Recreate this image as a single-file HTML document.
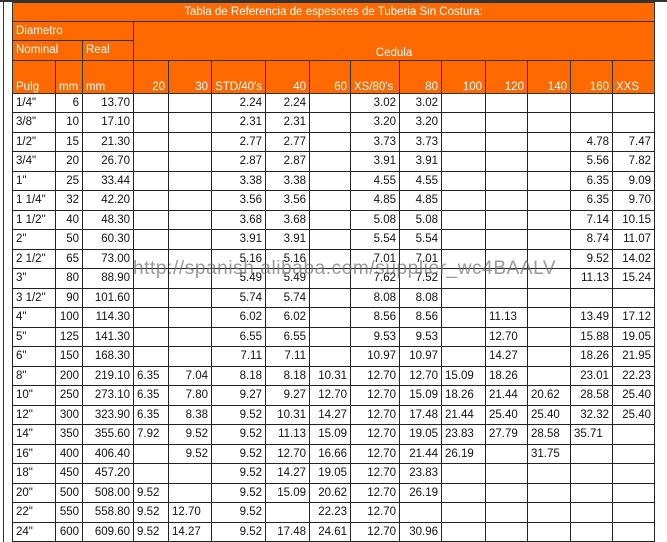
<!DOCTYPE html>
<html><head><meta charset="utf-8"><style>
html,body{margin:0;padding:0;background:#fff;width:667px;height:542px;overflow:hidden;position:relative}
table{position:absolute;left:12px;top:2px;border-collapse:collapse;table-layout:fixed;font-family:"Liberation Sans",sans-serif;font-size:11.5px;color:#111}
td{border:1px solid #222;padding:0 3px;height:18.5px;white-space:nowrap;overflow:hidden;text-align:right}
.h td{background:#ff6a00;color:#fff;border-color:#333}
td.l{text-align:left}
.wm{position:absolute;left:133px;top:258px;font-family:"Liberation Sans",sans-serif;font-size:19px;color:rgba(110,110,110,0.7);letter-spacing:0.6px;pointer-events:none}
.frame{position:absolute;left:3px;top:0;width:1px;height:542px;background:#333}
.top{position:absolute;left:0;top:0;width:667px;height:2px;background:#333}
</style></head><body>
<div class="frame"></div><div class="top"></div>
<table>
<colgroup><col style="width:43px"><col style="width:27px"><col style="width:51px"><col style="width:35px"><col style="width:43px"><col style="width:54px"><col style="width:44px"><col style="width:41px"><col style="width:49px"><col style="width:42px"><col style="width:44px"><col style="width:42px"><col style="width:43px"><col style="width:42px"><col style="width:42px"></colgroup>
<tr class="h"><td colspan="15" style="text-align:center;height:18px">Tabla de Referencia de espesores de Tuberia Sin Costura:</td></tr>
<tr class="h"><td colspan="3" class="l" style="height:18px">Diametro</td><td colspan="12" rowspan="2" style="text-align:center;vertical-align:bottom;padding-bottom:1px">Cedula</td></tr>
<tr class="h"><td colspan="2" class="l" style="height:18px">Nominal</td><td class="l">Real</td></tr>
<tr class="h" style="vertical-align:bottom"><td class="l" style="height:32px">Pulg</td><td class="l">mm</td><td class="l">mm</td><td>20</td><td>30</td><td>STD/40's</td><td>40</td><td>60</td><td class="l">XS/80's</td><td>80</td><td>100</td><td>120</td><td>140</td><td>160</td><td class="l">XXS</td></tr>
<tr><td class="l">1/4"</td><td>6</td><td>13.70</td><td></td><td></td><td>2.24</td><td>2.24</td><td></td><td>3.02</td><td>3.02</td><td></td><td></td><td></td><td></td><td></td></tr>
<tr><td class="l">3/8"</td><td>10</td><td>17.10</td><td></td><td></td><td>2.31</td><td>2.31</td><td></td><td>3.20</td><td>3.20</td><td></td><td></td><td></td><td></td><td></td></tr>
<tr><td class="l">1/2"</td><td>15</td><td>21.30</td><td></td><td></td><td>2.77</td><td>2.77</td><td></td><td>3.73</td><td>3.73</td><td></td><td></td><td></td><td>4.78</td><td>7.47</td></tr>
<tr><td class="l">3/4"</td><td>20</td><td>26.70</td><td></td><td></td><td>2.87</td><td>2.87</td><td></td><td>3.91</td><td>3.91</td><td></td><td></td><td></td><td>5.56</td><td>7.82</td></tr>
<tr><td class="l">1"</td><td>25</td><td>33.44</td><td></td><td></td><td>3.38</td><td>3.38</td><td></td><td>4.55</td><td>4.55</td><td></td><td></td><td></td><td>6.35</td><td>9.09</td></tr>
<tr><td class="l">1 1/4"</td><td>32</td><td>42.20</td><td></td><td></td><td>3.56</td><td>3.56</td><td></td><td>4.85</td><td>4.85</td><td></td><td></td><td></td><td>6.35</td><td>9.70</td></tr>
<tr><td class="l">1 1/2"</td><td>40</td><td>48.30</td><td></td><td></td><td>3.68</td><td>3.68</td><td></td><td>5.08</td><td>5.08</td><td></td><td></td><td></td><td>7.14</td><td>10.15</td></tr>
<tr><td class="l">2"</td><td>50</td><td>60.30</td><td></td><td></td><td>3.91</td><td>3.91</td><td></td><td>5.54</td><td>5.54</td><td></td><td></td><td></td><td>8.74</td><td>11.07</td></tr>
<tr><td class="l">2 1/2"</td><td>65</td><td>73.00</td><td></td><td></td><td>5.16</td><td>5.16</td><td></td><td>7.01</td><td>7.01</td><td></td><td></td><td></td><td>9.52</td><td>14.02</td></tr>
<tr><td class="l">3"</td><td>80</td><td>88.90</td><td></td><td></td><td>5.49</td><td>5.49</td><td></td><td>7.62</td><td>7.52</td><td></td><td></td><td></td><td>11.13</td><td>15.24</td></tr>
<tr><td class="l">3 1/2"</td><td>90</td><td>101.60</td><td></td><td></td><td>5.74</td><td>5.74</td><td></td><td>8.08</td><td>8.08</td><td></td><td></td><td></td><td></td><td></td></tr>
<tr><td class="l">4"</td><td>100</td><td>114.30</td><td></td><td></td><td>6.02</td><td>6.02</td><td></td><td>8.56</td><td>8.56</td><td></td><td class="l">11.13</td><td></td><td>13.49</td><td>17.12</td></tr>
<tr><td class="l">5"</td><td>125</td><td>141.30</td><td></td><td></td><td>6.55</td><td>6.55</td><td></td><td>9.53</td><td>9.53</td><td></td><td class="l">12.70</td><td></td><td>15.88</td><td>19.05</td></tr>
<tr><td class="l">6"</td><td>150</td><td>168.30</td><td></td><td></td><td>7.11</td><td>7.11</td><td></td><td>10.97</td><td>10.97</td><td></td><td class="l">14.27</td><td></td><td>18.26</td><td>21.95</td></tr>
<tr><td class="l">8"</td><td>200</td><td>219.10</td><td class="l">6.35</td><td>7.04</td><td>8.18</td><td>8.18</td><td>10.31</td><td>12.70</td><td>12.70</td><td class="l">15.09</td><td class="l">18.26</td><td></td><td>23.01</td><td>22.23</td></tr>
<tr><td class="l">10"</td><td>250</td><td>273.10</td><td class="l">6.35</td><td>7.80</td><td>9.27</td><td>9.27</td><td>12.70</td><td>12.70</td><td>15.09</td><td class="l">18.26</td><td class="l">21.44</td><td class="l">20.62</td><td>28.58</td><td>25.40</td></tr>
<tr><td class="l">12"</td><td>300</td><td>323.90</td><td class="l">6.35</td><td>8.38</td><td>9.52</td><td>10.31</td><td>14.27</td><td>12.70</td><td>17.48</td><td class="l">21.44</td><td class="l">25.40</td><td class="l">25.40</td><td>32.32</td><td>25.40</td></tr>
<tr><td class="l">14"</td><td>350</td><td>355.60</td><td class="l">7.92</td><td>9.52</td><td>9.52</td><td>11.13</td><td>15.09</td><td>12.70</td><td>19.05</td><td class="l">23.83</td><td class="l">27.79</td><td class="l">28.58</td><td class="l">35.71</td><td></td></tr>
<tr><td class="l">16"</td><td>400</td><td>406.40</td><td></td><td>9.52</td><td>9.52</td><td>12.70</td><td>16.66</td><td>12.70</td><td>21.44</td><td class="l">26.19</td><td></td><td class="l">31.75</td><td></td><td></td></tr>
<tr><td class="l">18"</td><td>450</td><td>457.20</td><td></td><td></td><td>9.52</td><td>14.27</td><td>19.05</td><td>12.70</td><td>23.83</td><td></td><td></td><td></td><td></td><td></td></tr>
<tr><td class="l">20"</td><td>500</td><td>508.00</td><td class="l">9.52</td><td></td><td>9.52</td><td>15.09</td><td>20.62</td><td>12.70</td><td>26.19</td><td></td><td></td><td></td><td></td><td></td></tr>
<tr><td class="l">22"</td><td>550</td><td>558.80</td><td class="l">9.52</td><td class="l">12.70</td><td>9.52</td><td></td><td>22.23</td><td>12.70</td><td></td><td></td><td></td><td></td><td></td><td></td></tr>
<tr><td class="l">24"</td><td>600</td><td>609.60</td><td class="l">9.52</td><td class="l">14.27</td><td>9.52</td><td>17.48</td><td>24.61</td><td>12.70</td><td>30.96</td><td></td><td></td><td></td><td></td><td></td></tr>
</table>
<div class="wm">http://spanish.alibaba.com/supplier_wc4BAALV</div>
</body></html>
